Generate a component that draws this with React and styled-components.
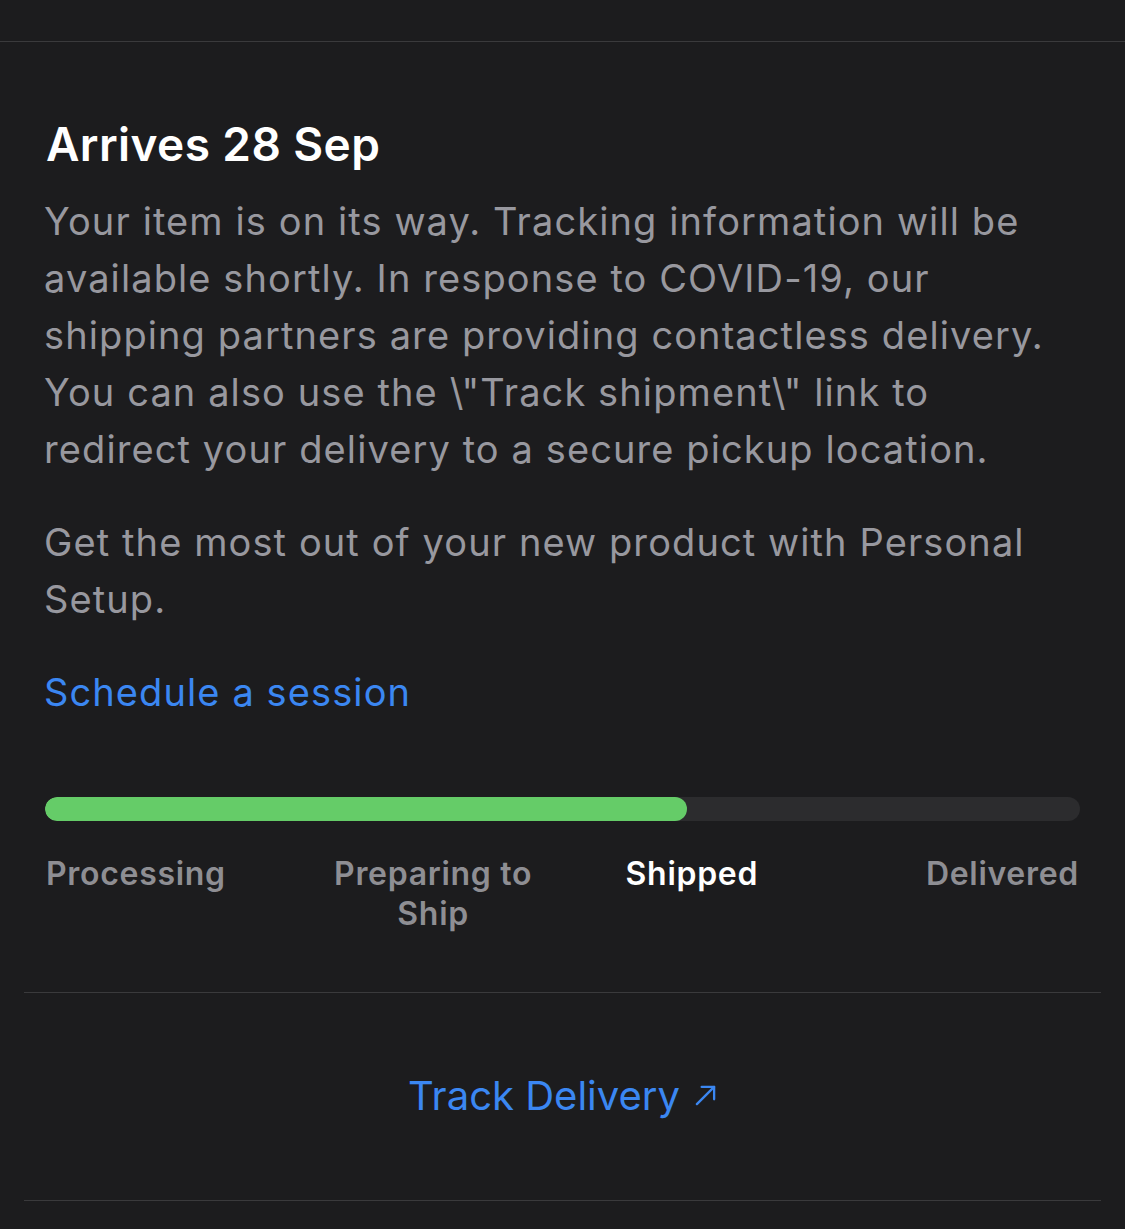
import React from 'react'
import styled, { createGlobalStyle } from 'styled-components'

const GlobalStyle = createGlobalStyle`
    body {
        margin: 0;
        background: #1c1c1e;
        font-family: Inter, 'Noto Sans', sans-serif;
        -webkit-font-smoothing: antialiased;
    }
`

const TopBar = styled.div`
    height: 41px;
    border-bottom: 1px solid #3a3a3c;
`

const Card = styled.div`
    padding: 0 24px;
`

const Content = styled.div`
    padding: 73px 20px 0;
`

const Heading = styled.h1`
    margin: 0 0 20px;
    padding-left: 2px;
    font-size: 46px;
    font-weight: 600;
    letter-spacing: 0.4px;
    color: #ffffff;
    line-height: 58px;
`

const Paragraph = styled.p`
    margin: 0 0 36px;
    font-size: 38px;
    line-height: 57px;
    letter-spacing: 1.1px;
    color: #98989f;
`

const Link = styled.a`
    display: inline-flex;
    align-items: center;
    gap: 14px;
    font-size: ${(p) => p.size || 38}px;
    letter-spacing: ${(p) => p.spacing || 0}px;
    line-height: 57px;
    color: #3b87f2;
    text-decoration: none;
`

const Progress = styled.div`
    margin-top: 76px;
    padding: 0 1px;
`

const Track = styled.div`
    height: 24px;
    border-radius: 12px;
    background: #2c2c2e;
    overflow: hidden;
`

const Fill = styled.div`
    height: 100%;
    border-radius: 12px;
    background: #65cc68;
`

const Steps = styled.div`
    display: grid;
    grid-template-columns: repeat(4, 1fr);
    margin-top: 33px;
    padding-bottom: 58px;
`

const Step = styled.div`
    font-size: 32px;
    font-weight: 600;
    line-height: 40px;
    letter-spacing: 0.7px;
    text-align: ${(p) => p.align};
    color: ${(p) => (p.current ? '#ffffff' : '#8e8e93')};
    padding: 0 1px;
`

const Divider = styled.div`
    border-top: 1px solid #3a3a3c;
`

const Footer = styled.div`
    display: flex;
    justify-content: center;
    padding: 74px 0 76px;
`

const steps = [
    { name: 'Processing', align: 'left' },
    { name: 'Preparing to Ship', align: 'center' },
    { name: 'Shipped', align: 'center', current: true },
    { name: 'Delivered', align: 'right' },
]

const ArrowUpRight = () => (
    <svg width="23" height="23" viewBox="0 0 24 24" fill="none" stroke="#3b87f2" strokeWidth="2.4" strokeLinecap="round" strokeLinejoin="round">
        <path d="M3 21 L21 3" />
        <path d="M8 3 H21 V16" />
    </svg>
)

const App = () => {
    return (
        <>
            <GlobalStyle />
            <TopBar />
            <Card>
                <Content>
                    <Heading>Arrives 28 Sep</Heading>
                    <Paragraph>
                        {'Your item is on its way. Tracking information will be available shortly. In response to COVID-19, our shipping partners are providing contactless delivery. You can also use the \\"Track shipment\\" link to redirect your delivery to a secure pickup location.'}
                    </Paragraph>
                    <Paragraph>Get the most out of your new product with Personal Setup.</Paragraph>
                    <Link href="#" spacing={1.1}>Schedule a session</Link>
                    <Progress>
                        <Track>
                            <Fill style={{ width: '62%' }} />
                        </Track>
                        <Steps>
                            {steps.map((s) => (
                                <Step key={s.name} align={s.align} current={s.current}>
                                    {s.name}
                                </Step>
                            ))}
                        </Steps>
                    </Progress>
                </Content>
                <Divider />
                <Footer>
                    <Link href="#" size={40}>
                        Track Delivery <ArrowUpRight />
                    </Link>
                </Footer>
                <Divider />
            </Card>
        </>
    )
}

export default App
